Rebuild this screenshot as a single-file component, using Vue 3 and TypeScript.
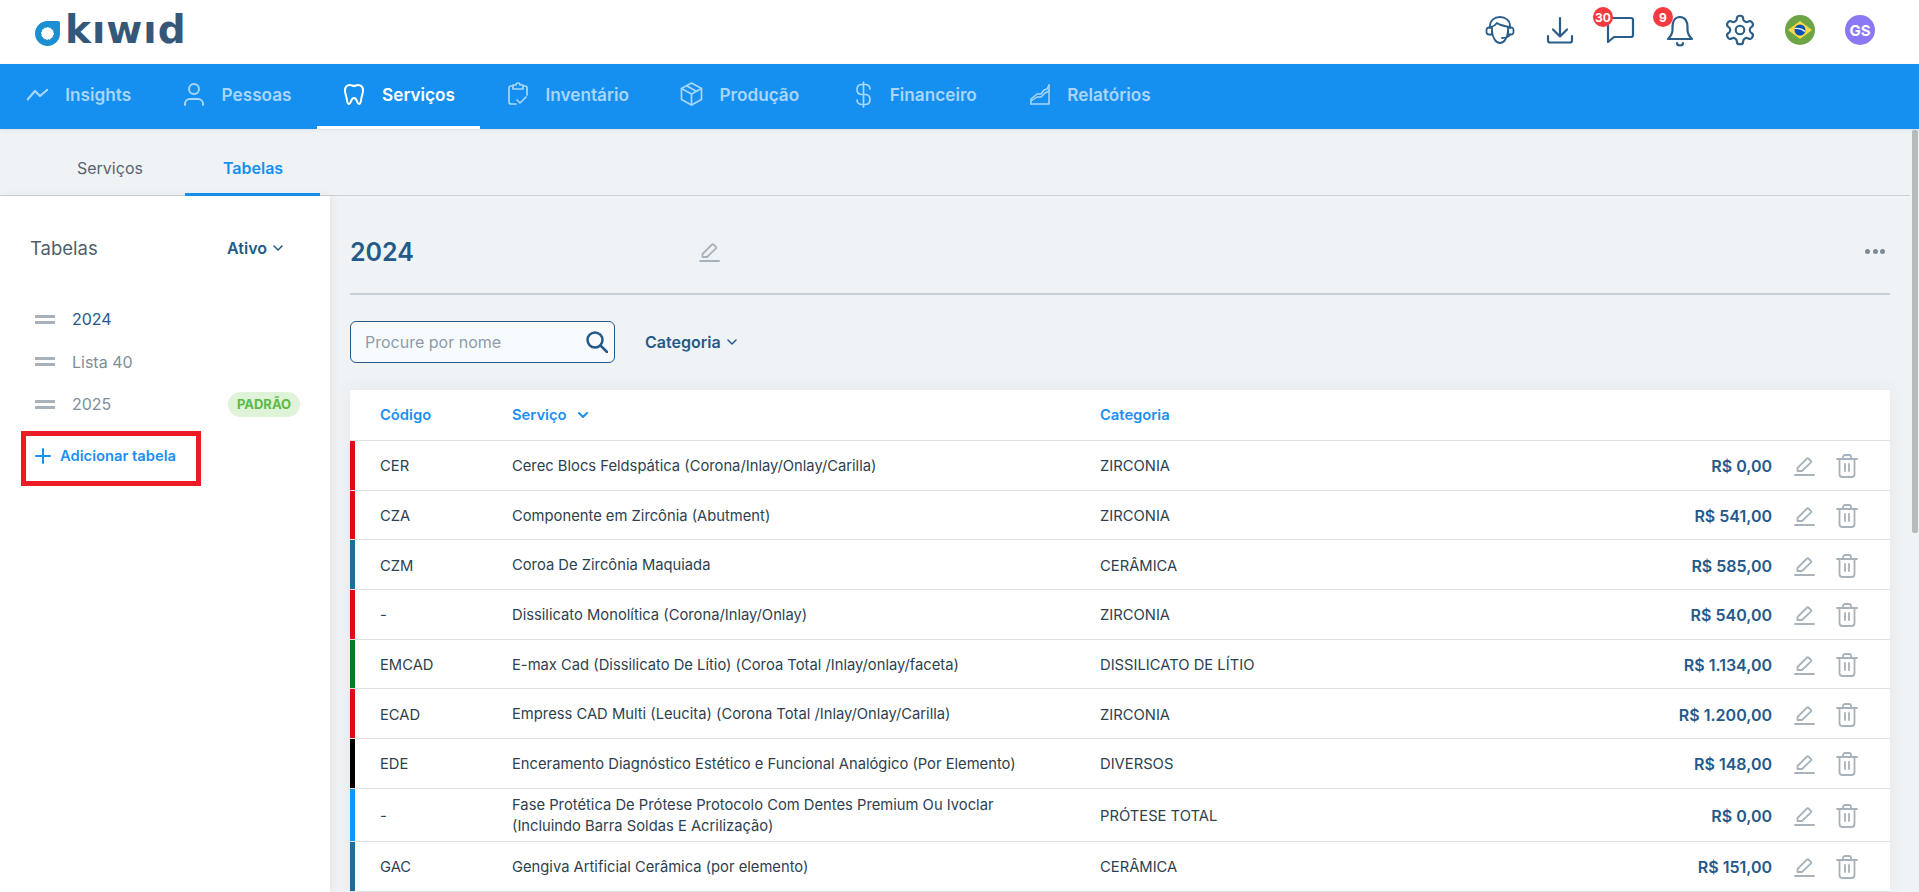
<script setup lang="ts">
interface NavItem { label: string; paths: string[]; active?: boolean; sw?: number }
interface Row { code: string; name: string[]; cat: string; price: string; color: string }

const nav: NavItem[] = [
  { label: 'Insights', sw: 2.2, paths: ['M3 17 L10 9 L15 14 L22 8', 'M3 17.5h.01', 'M22 8h.01'] },
  { label: 'Pessoas', paths: ['M12 2a5 5 0 1 0 0 10a5 5 0 1 0 0-10z', 'M3 23v-1a5 5 0 0 1 5-5h8a5 5 0 0 1 5 5v1'] },
  { label: 'Serviços', active: true, paths: ['M8 3c-3 0-5 2-5 5.5 0 3 1 4.5 1.5 7 .4 2.5.7 6.5 2.5 6.5 2 0 1.8-6 5-6s3 6 5 6c1.8 0 2.1-4 2.5-6.5.5-2.5 1.5-4 1.5-7C21 5 19 3 16 3c-1.6 0-2.6 1-4 1s-2.4-1-4-1z'] },
  { label: 'Inventário', sw: 1.7, paths: ['M7 4H5a2 2 0 0 0-2 2v14a2 2 0 0 0 2 2h5', 'M7 3h3a2 2 0 0 1 4 0h3v4H7z', 'M17 4h2a2 2 0 0 1 2 2v7', 'M11 18l3 3 6-6'] },
  { label: 'Produção', sw: 1.7, paths: ['M12.5 1L22.5 6.5V17.5L12.5 23L2.5 17.5V6.5Z', 'M2.5 6.5L12.5 12L22.5 6.5', 'M12.5 12V23', 'M7.5 3.75L17.5 9.25'] },
  { label: 'Financeiro', sw: 1.7, paths: ['M13.5 0V25', 'M20 7c0-2.8-2-4.5-5-4.5h-3C9 2.500 7 4.500 7 7.500s2 5 5 5h3c3 0 5 2 5 5s-2 5-5 5h-3c-3 0-5-2-5-4.500'] },
  { label: 'Relatórios', sw: 1.5, paths: ['M4 22H22V3', 'M4 22V17L10 12L14 12L17 8L20 7L22 3', 'M4 19L10 15L14 15L18 11L22 9'] },
]

const rows: Row[] = [
  { code: 'CER', name: ['Cerec Blocs Feldspática (Corona/Inlay/Onlay/Carilla)'], cat: 'ZIRCONIA', price: 'R$ 0,00', color: '#e10a0f' },
  { code: 'CZA', name: ['Componente em Zircônia (Abutment)'], cat: 'ZIRCONIA', price: 'R$ 541,00', color: '#e10a0f' },
  { code: 'CZM', name: ['Coroa De Zircônia Maquiada'], cat: 'CERÂMICA', price: 'R$ 585,00', color: '#1f6b9e' },
  { code: '-', name: ['Dissilicato Monolítica (Corona/Inlay/Onlay)'], cat: 'ZIRCONIA', price: 'R$ 540,00', color: '#e10a0f' },
  { code: 'EMCAD', name: ['E-max Cad (Dissilicato De Lítio) (Coroa Total /Inlay/onlay/faceta)'], cat: 'DISSILICATO DE LÍTIO', price: 'R$ 1.134,00', color: '#0a7a1e' },
  { code: 'ECAD', name: ['Empress CAD Multi (Leucita) (Corona Total /Inlay/Onlay/Carilla)'], cat: 'ZIRCONIA', price: 'R$ 1.200,00', color: '#e10a0f' },
  { code: 'EDE', name: ['Enceramento Diagnóstico Estético e Funcional Analógico (Por Elemento)'], cat: 'DIVERSOS', price: 'R$ 148,00', color: '#000000' },
  { code: '-', name: ['Fase Protética De Prótese Protocolo Com Dentes Premium Ou Ivoclar', '(Incluindo Barra Soldas E Acrilização)'], cat: 'PRÓTESE TOTAL', price: 'R$ 0,00', color: '#0a9bfa' },
  { code: 'GAC', name: ['Gengiva Artificial Cerâmica (por elemento)'], cat: 'CERÂMICA', price: 'R$ 151,00', color: '#1f6b9e' },
]

const tables = [
  { name: '2024', current: true, standard: false },
  { name: 'Lista 40', current: false, standard: false },
  { name: '2025', current: false, standard: true },
]
</script>

<template>
  <div class="page">
    <header class="top">
      <div class="logo">
        <svg class="drop" viewBox="0 0 25 25" width="25" height="25">
          <path d="M23 0H12.500A12.500 12.500 0 1 0 25 12.500V2a2 2 0 0 0-2-2z" fill="#1b8fd2" />
          <circle cx="12.500" cy="12.500" r="6" fill="#fff" stroke="#fff" stroke-width="1" stroke-dasharray="1.500 1.500" />
        </svg>
        <span class="word">kıwıd</span>
      </div>
      <div class="tools">
        <svg class="tool" viewBox="0 0 30 30">
          <path d="M5 13V11C5 5.500 9.500 2 15 2S25 5.500 25 11V13" />
          <path d="M6 12C9 11 11 9.500 12 8C14 10 19 11 24 12" />
          <path d="M7 16C7.500 23 11 28 15 28C19 28 22.500 23 23 16" />
          <path d="M5 12.500H4A2.500 2.500 0 0 0 1.500 15V17A2.500 2.500 0 0 0 4 19.500H7V12.500" />
          <path d="M25 12.500H26A2.500 2.500 0 0 1 28.500 15V17A2.500 2.500 0 0 1 26 19.500H23V12.500" />
          <path d="M25 19.500C24 22 21 23 17 23" />
        </svg>
        <svg class="tool thick" viewBox="0 0 30 30">
          <path d="M15 3V21" />
          <path d="M8 14.500L15 21.500L22 14.500" />
          <path d="M3 21v4.500a2 2 0 0 0 2 2H25a2 2 0 0 0 2-2V21" />
        </svg>
        <div class="tool-wrap">
          <svg class="tool thick" viewBox="0 0 30 30">
            <path d="M4 3H26a2 2 0 0 1 2 2V20a2 2 0 0 1-2 2H9L3 27V4a1 1 0 0 1 1-1z" />
          </svg>
          <span class="badge">30</span>
        </div>
        <div class="tool-wrap">
          <svg class="tool thick" viewBox="0 0 30 30">
            <path d="M15 2C9.500 2 7.500 7 7.500 12V15C7.500 19 5.500 21.500 3 24H27C24.500 21.500 22.500 19 22.500 15V12C22.500 7 20.500 2 15 2Z" />
            <path d="M12 28a3 2.500 0 0 0 6 0" />
          </svg>
          <span class="badge">9</span>
        </div>
        <svg class="tool gear" viewBox="1.500 1.500 21 21">
          <path d="M12.220 2h-.440a2 2 0 0 0-2 2v.180a2 2 0 0 1-1 1.730l-.430.250a2 2 0 0 1-2 0l-.150-.080a2 2 0 0 0-2.730.730l-.220.380a2 2 0 0 0 .730 2.730l.150.100a2 2 0 0 1 1 1.720v.510a2 2 0 0 1-1 1.740l-.150.090a2 2 0 0 0-.730 2.730l.220.380a2 2 0 0 0 2.730.730l.150-.080a2 2 0 0 1 2 0l.430.250a2 2 0 0 1 1 1.730V20a2 2 0 0 0 2 2h.440a2 2 0 0 0 2-2v-.180a2 2 0 0 1 1-1.730l.430-.250a2 2 0 0 1 2 0l.150.080a2 2 0 0 0 2.730-.730l.220-.390a2 2 0 0 0-.730-2.730l-.150-.080a2 2 0 0 1-1-1.740v-.500a2 2 0 0 1 1-1.740l.150-.090a2 2 0 0 0 .730-2.730l-.220-.380a2 2 0 0 0-2.730-.730l-.150.080a2 2 0 0 1-2 0l-.430-.250a2 2 0 0 1-1-1.730V4a2 2 0 0 0-2-2z" />
          <circle cx="12" cy="12" r="3" />
        </svg>
        <svg class="flag" viewBox="0 0 30 30" width="30" height="30">
          <circle cx="15" cy="15" r="15" fill="#6da544" />
          <path d="M15 6L27 15L15 24L3 15Z" fill="#ffda44" />
          <circle cx="15" cy="15" r="5.500" fill="#0052b4" />
          <path d="M9.800 13.500c4-.5 7.500.5 10.200 3" stroke="#f0f0f0" stroke-width="1.200" fill="none" />
        </svg>
        <div class="avatar">GS</div>
      </div>
    </header>

    <nav class="nav">
      <a v-for="item in nav" :key="item.label" class="nav-item" :class="{ active: item.active }">
        <svg class="nav-icon" viewBox="0 0 24 24" :style="{ strokeWidth: item.sw ?? 2 }">
          <path v-for="d in item.paths" :key="d" :d="d" />
        </svg>
        <span>{{ item.label }}</span>
      </a>
    </nav>

    <div class="body">
      <div class="workspace">
        <div class="tabs">
          <span class="tab">Serviços</span>
          <span class="tab current">Tabelas</span>
        </div>
        <div class="content">
          <aside class="side">
            <div class="side-head">
              <span class="side-title">Tabelas</span>
              <span class="filter">Ativo
                <svg class="chev" viewBox="0 0 10 6" width="10" height="6"><path d="M1 1l4 4 4-4" /></svg>
              </span>
            </div>
            <div v-for="t in tables" :key="t.name" class="side-row" :class="{ now: t.current }">
              <span class="grip"></span>
              <span class="side-name">{{ t.name }}</span>
              <span v-if="t.standard" class="tag">PADRÃO</span>
            </div>
            <div class="add">
              <svg viewBox="0 0 16 16" width="16" height="16"><path d="M8 1V15M1 8H15" /></svg>
              <span>Adicionar tabela</span>
            </div>
            <div class="mark"></div>
          </aside>

          <main class="main">
            <div class="title-row">
              <h1 class="title">2024</h1>
              <svg class="pen big" viewBox="0 0 20 20"><path d="M3.500 15V12L13 2.500a1 1 0 0 1 1.400 0L17 5a1 1 0 0 1 0 1.400L8 15Z" /><path d="M1 19H20" /></svg>
              <div class="dots"><i></i><i></i><i></i></div>
            </div>
            <div class="filters">
              <div class="search">
                <span class="ph">Procure por nome</span>
                <svg viewBox="0 0 22 22" width="22" height="22"><circle cx="9" cy="9" r="7.500" /><path d="M14.500 14.500L21 21" /></svg>
              </div>
              <span class="filter">Categoria
                <svg class="chev" viewBox="0 0 10 6" width="10" height="6"><path d="M1 1l4 4 4-4" /></svg>
              </span>
            </div>
            <div class="table">
              <div class="thead">
                <span>Código</span>
                <span class="sort">Serviço
                  <svg class="chev" viewBox="0 0 10 6" width="10" height="6"><path d="M1 1l4 4 4-4" /></svg>
                </span>
                <span>Categoria</span>
              </div>
              <div v-for="r in rows" :key="r.code + r.name[0]" class="row" :style="{ boxShadow: `inset 5px 0 0 ${r.color}` }">
                <span>{{ r.code }}</span>
                <span class="svc"><span v-for="n in r.name" :key="n">{{ n }}</span></span>
                <span>{{ r.cat }}</span>
                <span class="price">{{ r.price }}</span>
                <svg class="pen" viewBox="0 0 20 20"><path d="M3.500 15V12L13 2.500a1 1 0 0 1 1.400 0L17 5a1 1 0 0 1 0 1.400L8 15Z" /><path d="M1 19H20" /></svg>
                <svg class="bin" viewBox="0 0 22 24"><path d="M1 5H21" /><path d="M7 5V3a2 2 0 0 1 2-2h4a2 2 0 0 1 2 2v2" /><path d="M3.500 5V20a3 3 0 0 0 3 3h9a3 3 0 0 0 3-3V5" /><path d="M9 10V17M13 10V17" /></svg>
              </div>
            </div>
          </main>
        </div>
      </div>
      <div class="rail"><div class="thumb"></div></div>
    </div>
  </div>
</template>

<style>
html, body { margin: 0; overflow: hidden; }
</style>

<style scoped>
.page { height: 892px; overflow: hidden; display: flex; flex-direction: column; font-family: Inter, "Liberation Sans", sans-serif; background: #f0f3f5; color: #2e3f50; }

.top { height: 64px; flex: none; background: #fff; display: flex; align-items: center; justify-content: space-between; padding: 0 44px 4px 35px; box-sizing: border-box; }
.logo { display: flex; align-items: flex-end; gap: 5px; height: 32px; }
.drop { flex: none; margin-bottom: 0; }
.word { font-family: "DejaVu Sans", sans-serif; font-weight: 700; font-size: 39px; line-height: 32px; color: #35587a; letter-spacing: 1px; }
.tools { display: flex; align-items: center; gap: 30px; }
.tool { width: 30px; height: 30px; fill: none; stroke: #2a5d88; stroke-width: 1.800; stroke-linecap: round; stroke-linejoin: round; display: block; overflow: visible; }
.tool.thick { stroke-width: 2.200; }
.tool.gear { stroke-width: 1.500; }
.tool-wrap { position: relative; width: 30px; height: 30px; }
.badge { position: absolute; left: -12px; top: -8px; width: 20px; height: 20px; border-radius: 50%; background: #f63a3f; color: #fff; font-size: 12px; font-weight: 700; display: flex; align-items: center; justify-content: center; }
.flag { display: block; }
.avatar { width: 30px; height: 30px; border-radius: 50%; background: #8b78f5; color: #fff; font-size: 15px; font-weight: 700; display: flex; align-items: center; justify-content: center; }

.nav { height: 65px; flex: none; background: #1690f0; display: flex; box-shadow: 0 1px 4px rgba(0, 0, 0, .08); position: relative; }
.nav-item { display: flex; align-items: center; gap: 16px; padding: 0 25.250px 2px; font-size: 17.200px; font-weight: 600; color: #a9d6fb; box-sizing: border-box; border-bottom: 3px solid transparent; }
.nav-item.active { color: #fff; border-bottom-color: #fff; }
.nav-icon { width: 24px; height: 24px; fill: none; stroke: currentColor; stroke-linecap: round; stroke-linejoin: round; overflow: visible; flex: none; }

.body { flex: 1; min-height: 0; display: flex; }
.workspace { flex: 1; min-width: 0; display: flex; flex-direction: column; }
.rail { width: 9px; flex: none; padding: 1px 1px 0 2px; box-sizing: border-box; }
.thumb { height: 403px; background: #b6bcbc; border-radius: 2px; }

.tabs { height: 67px; flex: none; display: flex; border-bottom: 1px solid #cdd1d4; box-sizing: border-box; padding-left: 39px; }
.tab { padding: 10px 38px 0; display: flex; align-items: center; font-size: 16px; font-weight: 400; color: #59636d; margin-right: 4px; box-sizing: border-box; height: 67px; }
.tab.current { color: #1690f0; font-weight: 600; border-bottom: 3px solid #1690f0; margin-right: 0; padding: 13px 37px 0 38px; }

.content { flex: 1; min-height: 0; display: flex; }
.side { width: 330px; flex: none; background: #fff; position: relative; box-shadow: 2px 0 8px rgba(0, 0, 0, .06); }
.side-head { height: 102px; display: flex; align-items: center; justify-content: space-between; padding: 2px 47px 0 30px; box-sizing: border-box; }
.side-title { font-size: 18.500px; color: #4f5f6d; }
.filter { font-size: 16px; font-weight: 600; color: #24598a; display: inline-flex; align-items: center; gap: 6px; }
.chev { fill: none; stroke: currentColor; stroke-width: 1.500; stroke-linecap: round; stroke-linejoin: round; }
.side-row { height: 42.500px; display: flex; align-items: center; padding: 0 30px 0 35px; font-size: 16px; color: #7f8d99; box-sizing: border-box; }
.side-row.now { color: #24598a; }
.grip { width: 20px; height: 3px; border-top: 3px solid #a8b2bb; border-bottom: 3px solid #a8b2bb; box-sizing: content-box; margin-right: 17px; }
.side-name { flex: 1; }
.tag { height: 25px; width: 72px; border-radius: 13px; background: #dff3d9; color: #5cb947; font-size: 13px; font-weight: 700; display: flex; align-items: center; justify-content: center; }
.add { margin-top: 8px; height: 44px; display: flex; align-items: center; gap: 9px; padding-left: 35px; font-size: 14.750px; font-weight: 600; color: #1c90f0; }
.add svg { fill: none; stroke: #1c90f0; stroke-width: 2; stroke-linecap: round; flex: none; }
.mark { position: absolute; left: 21px; top: 235px; width: 180px; height: 55px; border: 5px solid #ed1c24; box-sizing: border-box; pointer-events: none; }

.main { flex: 1; min-width: 0; padding: 0 20px; box-sizing: border-box; }
.title-row { height: 99px; display: flex; align-items: center; border-bottom: 2px solid #c6cfd6; box-sizing: border-box; padding-top: 14px; }
.title { margin: 0; font-size: 25px; font-weight: 600; color: #24598a; width: 349px; }
.pen { width: 20px; height: 20px; fill: none; stroke: #a8b2ba; stroke-width: 1.800; stroke-linejoin: round; stroke-linecap: round; overflow: visible; }
.dots { margin-left: auto; display: flex; gap: 2.500px; margin-right: 5px; }
.dots i { width: 5px; height: 5px; border-radius: 50%; background: #7c8a96; display: block; }
.filters { display: flex; align-items: center; gap: 30px; margin-top: 26px; }
.search { width: 265px; height: 42px; border: 1.500px solid #24598a; border-radius: 6px; background: #f8fbfd; display: flex; align-items: center; justify-content: space-between; padding: 0 6px 0 14px; box-sizing: border-box; }
.ph { font-size: 16px; color: #8c9baa; }
.search svg { fill: none; stroke: #24598a; stroke-width: 2.500; stroke-linecap: round; }

.table { margin-top: 27px; background: #fff; box-shadow: 0 0 20px rgba(0, 0, 0, .05); }
.thead, .row { display: grid; grid-template-columns: 132px 588px 300px 1fr 43px 43px; align-items: center; padding: 0 32px 0 30px; border-bottom: 1px solid #dde2e6; box-sizing: border-box; font-size: 14.750px; }
.thead { height: 51px; font-weight: 600; color: #1c90f0; }
.sort { display: inline-flex; align-items: center; gap: 11px; }
.sort .chev { stroke-width: 2; }
.row { min-height: 49.700px; color: #2e3f50; padding-top: 2px; }
.svc { display: flex; flex-direction: column; line-height: 21px; padding: 4px 0; }
.price { font-size: 16px; font-weight: 600; color: #24598a; text-align: right; }
.row .pen { justify-self: end; margin-right: 1px; grid-column: 5; }
.row .bin { width: 22px; height: 24px; justify-self: end; grid-column: 6; fill: none; stroke: #a8b2ba; stroke-width: 1.800; stroke-linecap: round; stroke-linejoin: round; overflow: visible; }
</style>
